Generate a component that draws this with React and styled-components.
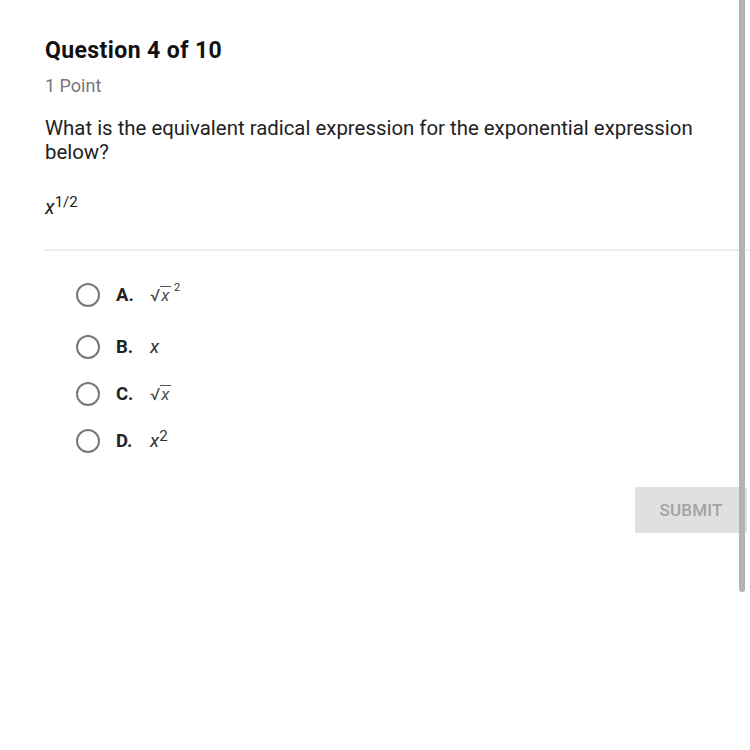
import React from 'react';
import styled, { createGlobalStyle } from 'styled-components';

const GlobalStyle = createGlobalStyle`
  html, body {
    margin: 0;
    padding: 0;
    background: #ffffff;
    font-family: Roboto, "Liberation Sans", sans-serif;
  }
`;

const Page = styled.div`
  position: relative;
  width: 750px;
  height: 750px;
  overflow: hidden;
  background: #fff;
`;

const Content = styled.div`
  padding: 37px 0 0 45px;
`;

const Title = styled.h1`
  margin: 0;
  font-size: 23px;
  font-weight: 700;
  letter-spacing: 0.4px;
  color: #111;
  line-height: 28px;
`;

const Points = styled.div`
  margin-top: 10px;
  font-size: 18px;
  color: #777;
  line-height: 22px;
`;

const Prompt = styled.p`
  margin: 19px 0 0;
  width: 684px;
  font-size: 20.4px;
  line-height: 24px;
  color: #222;
`;

const Expression = styled.div`
  margin-top: 31px;
  font-size: 20px;
  color: #222;
  height: 24px;
`;

const Var = styled.i`
  font-style: italic;
`;

const Sup = styled.sup`
  font-size: ${p => p.$size || 15}px;
  vertical-align: ${p => p.$raise || 7}px;
  line-height: 0;
  font-style: normal;
`;

const Divider = styled.hr`
  margin: 30px 0 0;
  border: none;
  border-top: 2px solid #eeeeee;
`;

const Options = styled.div`
  display: flex;
  flex-direction: column;
  gap: 23px;
  padding: 32px 0 0 31px;
`;

const Option = styled.label`
  display: flex;
  align-items: center;
  height: 24px;
  gap: 16px;
  cursor: pointer;
  margin-bottom: ${p => p.$extra || 0}px;
`;

const Radio = styled.span`
  width: 20px;
  height: 20px;
  border: 2px solid #787878;
  border-radius: 50%;
  flex-shrink: 0;
`;

const Letter = styled.span`
  font-size: 18.5px;
  font-weight: 700;
  color: #222;
  width: 18px;
`;

const Answer = styled.span`
  font-size: 19px;
  color: #333;
  display: inline-block;
  line-height: 24px;
  white-space: nowrap;
`;

const Radical = styled.span`
  display: inline-block;
  color: #444;
  white-space: nowrap;
`;

const RadSign = styled.span`
  font-size: 17px;
  font-style: normal;
`;

const Radicand = styled.i`
  display: inline-block;
  border-top: 1px solid #555;
  line-height: 17px;
  padding: 0 2px 0 1px;
  font-size: 17px;
  color: #555;
`;

const Footer = styled.div`
  display: flex;
  justify-content: flex-end;
  margin-top: 34px;
  padding-right: 3px;
`;

const SubmitButton = styled.button`
  width: 112px;
  height: 46px;
  border: none;
  border-radius: 2px;
  background: #e0e0e0;
  color: #a2a2a2;
  font-family: Roboto, "Liberation Sans", sans-serif;
  font-size: 17px;
  font-weight: 500;
  letter-spacing: 0.2px;
`;

const Scrollbar = styled.div`
  position: absolute;
  top: 0;
  left: 739px;
  width: 6px;
  height: 592px;
  background: #b3b3b3;
  border-radius: 0 0 3px 3px;
`;

const Sqrt = ({ children }) => (
  <Radical>
    <RadSign>√</RadSign>
    <Radicand>{children}</Radicand>
  </Radical>
);

const options = [
  { letter: 'A.', content: <><Sqrt>x</Sqrt><Sup $size={11} $raise={10}>&nbsp;2</Sup></>, extra: 5 },
  { letter: 'B.', content: <Var>x</Var> },
  { letter: 'C.', content: <Sqrt>x</Sqrt> },
  { letter: 'D.', content: <><Var>x</Var><Sup $size={15} $raise={6}>2</Sup></> },
];

export default function App() {
  return (
    <Page>
      <GlobalStyle />
      <Content>
        <Title>Question 4 of 10</Title>
        <Points>1 Point</Points>
        <Prompt>What is the equivalent radical expression for the exponential expression below?</Prompt>
        <Expression>
          <Var>x</Var><Sup>1/2</Sup>
        </Expression>
        <Divider />
        <Options>
          {options.map(o => (
            <Option key={o.letter} $extra={o.extra}>
              <Radio />
              <Letter>{o.letter}</Letter>
              <Answer>{o.content}</Answer>
            </Option>
          ))}
        </Options>
        <Footer>
          <SubmitButton>SUBMIT</SubmitButton>
        </Footer>
      </Content>
      <Scrollbar />
    </Page>
  );
}
